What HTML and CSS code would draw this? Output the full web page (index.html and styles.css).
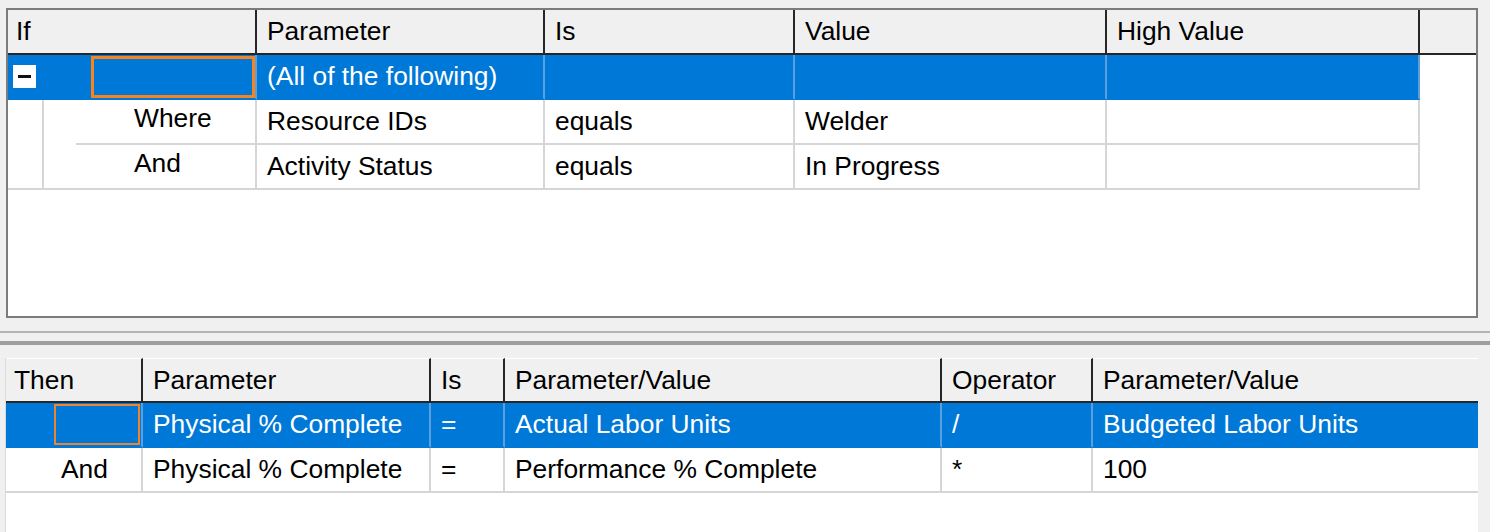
FILE: index.html
```html
<!DOCTYPE html>
<html lang="en">

<head>
    <meta charset="UTF-8">
    <meta name="viewport" content="width=device-width, initial-scale=1.0">
    <title>Global Change</title>
    <link rel="stylesheet" href="styles.css">
</head>

<body>
    <!-- "If" conditions grid -->
    <div class="pane pane-if">
        <div class="row head">
            <div class="cell first">If</div>
            <div class="cell">Parameter</div>
            <div class="cell">Is</div>
            <div class="cell">Value</div>
            <div class="cell">High Value</div>
            <div class="cell filler"></div>
        </div>
        <div class="row selected">
            <div class="cell tree-root">
                <span class="expander"></span>
                <span class="focus-box"></span>
            </div>
            <div class="cell">(All of the following)</div>
            <div class="cell"></div>
            <div class="cell"></div>
            <div class="cell"></div>
            <div class="cell filler"></div>
        </div>
        <div class="row">
            <div class="cell tree-child has-next">
                <span class="tree-indent"></span>
                <span class="tree-label">Where</span>
            </div>
            <div class="cell">Resource IDs</div>
            <div class="cell">equals</div>
            <div class="cell">Welder</div>
            <div class="cell"></div>
            <div class="cell filler"></div>
        </div>
        <div class="row">
            <div class="cell tree-child">
                <span class="tree-indent"></span>
                <span class="tree-label">And</span>
            </div>
            <div class="cell">Activity Status</div>
            <div class="cell">equals</div>
            <div class="cell">In Progress</div>
            <div class="cell"></div>
            <div class="cell filler"></div>
        </div>
    </div>

    <div class="splitter">
        <div class="split-line"></div>
        <div class="split-bar"></div>
    </div>

    <!-- "Then" assignments grid -->
    <div class="pane pane-then">
        <div class="row head">
            <div class="cell first">Then</div>
            <div class="cell">Parameter</div>
            <div class="cell">Is</div>
            <div class="cell">Parameter/Value</div>
            <div class="cell">Operator</div>
            <div class="cell last">Parameter/Value</div>
        </div>
        <div class="row selected">
            <div class="cell then-first">
                <span class="focus-box small"></span>
            </div>
            <div class="cell">Physical % Complete</div>
            <div class="cell">=</div>
            <div class="cell">Actual Labor Units</div>
            <div class="cell">/</div>
            <div class="cell last">Budgeted Labor Units</div>
        </div>
        <div class="row">
            <div class="cell then-label">And</div>
            <div class="cell">Physical % Complete</div>
            <div class="cell">=</div>
            <div class="cell">Performance % Complete</div>
            <div class="cell">*</div>
            <div class="cell last">100</div>
        </div>
    </div>
</body>

</html>
```

FILE: styles.css
```css
html,
body {
    margin: 0;
    height: 532px;
    overflow: hidden;
}

body {
    background-color: #f0f0f0;
    font-family: "Liberation Sans", Arial, sans-serif;
    font-size: 26.4px;
    color: #000;
}

.pane {
    box-sizing: border-box;
    background-color: #fff;
}

.pane-if {
    margin: 8px 12px 0 6px;
    height: 310px;
    border: 2px solid #7c7c7c;
}

.pane-then {
    margin: 0 12px 0 6px;
    height: 174px;
    box-shadow: -1px 0 0 #dadada;
}

.row {
    display: grid;
}

.pane-if .row {
    grid-template-columns: 249px 288px 250px 312px 313px 56px;
}

.pane-then .row {
    grid-template-columns: 137px 288px 74px 437px 151px 385px;
}

.cell {
    box-sizing: border-box;
    height: 45px;
    display: flex;
    align-items: center;
    padding-left: 10px;
    white-space: nowrap;
    overflow: hidden;
    border-right: 2px solid #d6d6d6;
    border-bottom: 2px solid #d6d6d6;
}

.cell.first {
    padding-left: 8px;
}

.cell.filler {
    border: none;
    background-color: #fff;
}

.cell.last {
    border-right: none;
}

/* column headers */
.head .cell {
    background-color: #f0f0f0;
    border-right-color: #262626;
    border-bottom-color: #262626;
}

.head .cell.filler {
    background-color: #f0f0f0;
    border-right: none;
    border-bottom: 2px solid #262626;
}

.head .cell.last {
    border-right: none;
}

.pane-then .head .cell {
    border-top: 1px solid #fff;
}

/* selected row */
.selected .cell {
    background-color: #0078d7;
    color: #fff;
    border-right-color: #5c9fde;
    border-bottom-color: #0078d7;
}

.selected .cell.filler {
    background-color: #fff;
}

.focus-box {
    box-sizing: border-box;
    margin-left: auto;
    width: 164px;
    height: 42px;
    border: 3px solid #f5841f;
}

.focus-box.small {
    width: 86px;
    height: 41px;
    margin-right: 1px;
    border-width: 2px;
    border-color: #ec8430;
}

/* tree column */
.tree-root {
    padding-left: 0;
}

.expander {
    position: relative;
    width: 23px;
    height: 23px;
    margin-left: 5px;
    background-color: #fff;
}

.expander::after {
    content: "";
    position: absolute;
    left: 5px;
    top: 10px;
    width: 13px;
    height: 3px;
    background-color: #111;
}

.tree-child {
    padding-left: 0;
    align-items: stretch;
}

.tree-child.has-next {
    border-bottom: none;
}

.tree-indent {
    box-sizing: border-box;
    width: 36px;
    flex: none;
    border-right: 2px solid #d6d6d6;
}

.tree-label {
    box-sizing: border-box;
    flex: 1;
    display: flex;
    align-items: center;
    margin-left: 32px;
    padding-left: 58px;
    padding-bottom: 7px;
}

.has-next .tree-label {
    border-bottom: 2px solid #d6d6d6;
}

.then-first {
    padding-left: 0;
}

.then-label {
    padding-left: 55px;
}

/* divider between the two grids */
.splitter {
    height: 40px;
    box-sizing: border-box;
    padding-top: 13px;
}

.split-line {
    height: 2px;
    background-color: #b4b4b4;
}

.split-bar {
    height: 4px;
    margin-top: 8px;
    background-color: #9e9e9e;
}
```
